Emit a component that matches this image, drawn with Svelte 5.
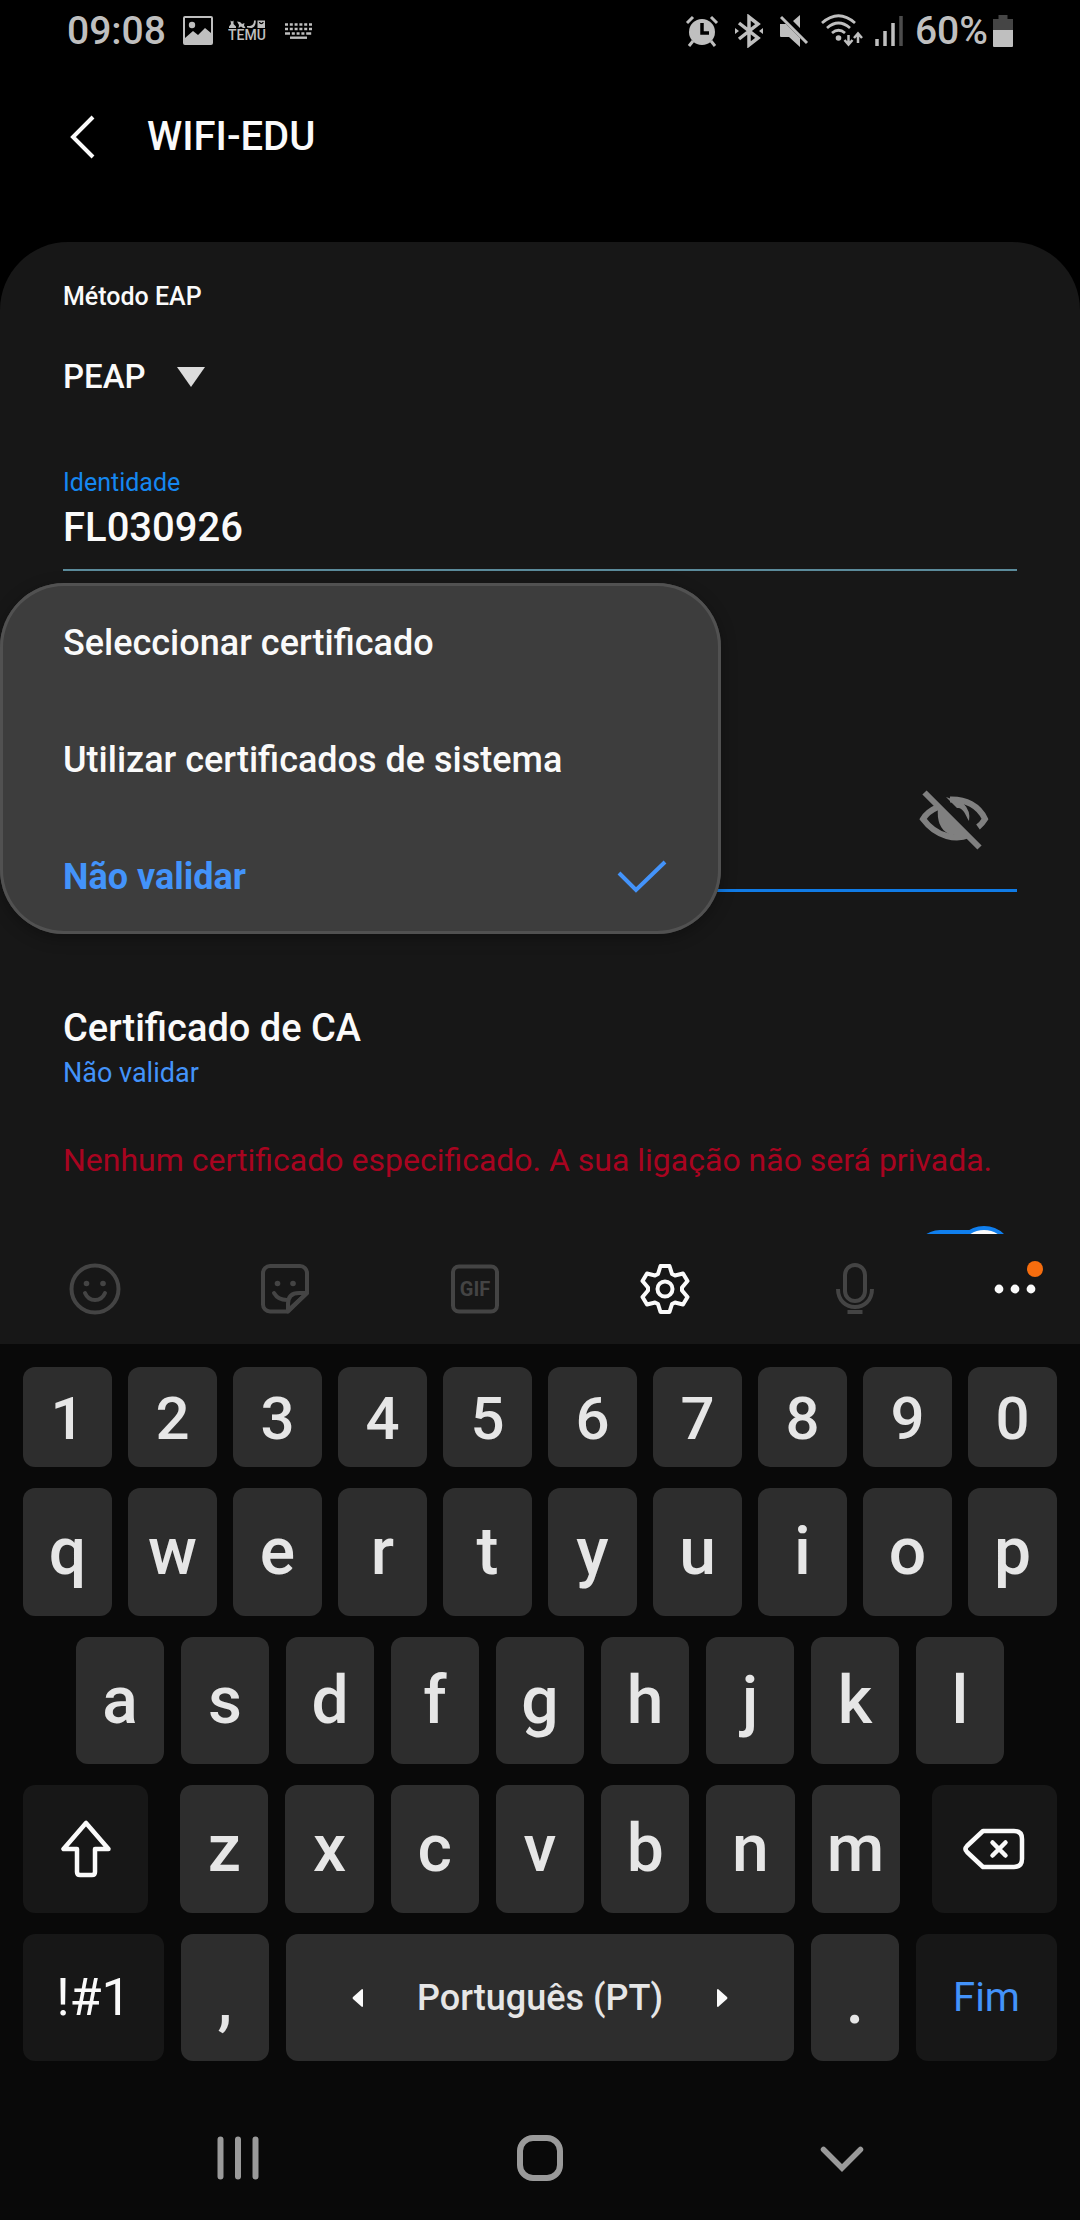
<script lang="ts">
	let method = $state('PEAP');
	let identity = $state('FL030926');
	let password = $state('');
	let certificate = $state('Não validar');
	let autoReconnect = $state(true);

	const certificates = ['Seleccionar certificado', 'Utilizar certificados de sistema', 'Não validar'];

	const digits = '1234567890'.split('');
	const topRow = 'qwertyuiop'.split('');
	const homeRow = 'asdfghjkl'.split('');
	const bottomRow = 'zxcvbnm'.split('');
</script>

<div class="screen">
	<header class="status-bar">
		<div class="status-group left">
			<span class="clock">09:08</span>
			<svg class="image-icon" width="32" height="32" viewBox="0 0 32 32">
				<path fill="currentColor" fill-rule="evenodd" d="M3 1h26a2 2 0 0 1 2 2v25a2 2 0 0 1-2 2H3a2 2 0 0 1-2-2V3a2 2 0 0 1 2-2zM3 3v20l8-7 5 4 7-7 6 5V3z" />
				<circle cx="10" cy="10" r="3.2" fill="currentColor" />
			</svg>
			<svg class="temu-icon" width="38" height="24" viewBox="0 0 38 24" fill="currentColor">
				<path d="M2.500 1.500l1.500 1 1.500-1V5L8 7.500V9H1V7.500L3 5zM9 2.500l3 .500 2 2 2.500-1-.500 2.500 1.500 2.500h-2.500L13 7.500 10.500 9 11 6zM26 1.500h1.800c0 5-2 7.500-5 7.500l-3.800-.500V7c4.500.500 7-1 7-5.500z" />
				<path fill-rule="evenodd" d="M29.500 1.500H37V9h-7.500zm1.300 1.500c1 3 4 3 5 0h-1.300c-.500 1.200-1.900 1.200-2.400 0z" />
				<text x="19" y="21" text-anchor="middle" font-size="14" font-weight="500">TEMU</text>
			</svg>
			<svg class="keyboard-icon" width="30" height="18" viewBox="0 0 30 18" stroke="currentColor" fill="none">
				<path stroke-width="2.600" stroke-dasharray="3 1.800" d="M1 2.500h28M1 7h28" />
				<path stroke-width="2.600" stroke-dasharray="5 1.800 3 1.800 3 1.800 3 1.800" d="M1 11.500h28" />
				<path stroke-width="2.400" d="M6 15.700h17" />
			</svg>
		</div>
		<div class="status-group right">
			<svg width="34" height="34" viewBox="0 0 34 34">
				<circle cx="17" cy="18" r="13" fill="currentColor" />
				<path d="M2 9l6-6M26 3l6 6M8 27l-4 5M26 27l4 5" stroke="currentColor" stroke-width="3" fill="none" />
				<path d="M17 9v10h7" stroke="#000" stroke-width="3.500" fill="none" />
			</svg>
			<svg class="bt" width="30" height="34" viewBox="0 0 30 34">
				<path d="M5 9l19 15-9 7V3l9 7L5 25" stroke="currentColor" stroke-width="3.500" fill="none" />
				<path d="M1 14l4 3-4 3zM29 14l-4 3 4 3z" fill="currentColor" />
			</svg>
			<svg class="mute" width="30" height="34" viewBox="0 0 30 34">
				<path d="M1 10h6L21 24v9L10 23H2q-1 0-1-1zM21 1v13l-7-7z" fill="currentColor" />
				<path d="M2 3l26 26" stroke="currentColor" stroke-width="3" />
			</svg>
			<svg class="wifi" width="42" height="34" viewBox="0 0 42 34" fill="none" stroke="currentColor" stroke-width="2.800">
				<path d="M1 9q16.500-14.500 33 0M6 14q11.500-10 23 0M11 19q6.500-5.500 13 0" />
				<circle cx="17.500" cy="24" r="2.800" fill="currentColor" stroke="none" />
				<path stroke-width="2.500" d="M27.500 21v9M23.500 26l4 4.500 4-4.500M37 29v-9M33 24l4-4.500 4 4.500" />
			</svg>
			<svg class="signal" width="28" height="34" viewBox="0 0 28 34" stroke="currentColor" stroke-width="3.500">
				<path d="M2 25v7M10 17v15M18 9v23" />
				<path d="M26 2v30" opacity="0.400" />
			</svg>
			<span class="clock">60%</span>
			<svg class="battery" width="22" height="34" viewBox="0 0 22 34">
				<path d="M6.500 1h9v4H21v12H1V5h5.500z" fill="#454545" />
				<path d="M1 16h20v16q0 1-1 1H2q-1 0-1-1z" fill="currentColor" />
			</svg>
		</div>
	</header>

	<div class="title-bar">
		<button class="back" aria-label="Voltar">
			<svg width="28" height="44" viewBox="0 0 28 44" fill="none" stroke="currentColor" stroke-width="4">
				<path d="M25 2L5 22l20 20" />
			</svg>
		</button>
		<h1>WIFI-EDU</h1>
	</div>

	<main class="sheet">
		<form class="form" onsubmit={(e) => e.preventDefault()}>
			<label class="small-label" for="eap">Método EAP</label>
			<div class="select-wrap">
				<select id="eap" bind:value={method}>
					<option>PEAP</option>
					<option>TLS</option>
					<option>PWD</option>
				</select>
				<svg width="28" height="20" viewBox="0 0 28 20"><path d="M0 0h28L14 20z" fill="#dcdcdc" /></svg>
			</div>

			<label class="small-label accent" for="identity">Identidade</label>
			<input id="identity" class="identity" type="text" bind:value={identity} />

			<div class="password">
				<input type="password" aria-label="Palavra-passe" bind:value={password} />
				<button type="button" class="eye" aria-label="Mostrar palavra-passe">
					<svg width="70" height="60" viewBox="0 0 70 60">
						<path d="M19 17C12 20 7 24 4 29c14 19 34 21 46 16" fill="none" stroke="currentColor" stroke-width="6" />
						<path d="M19 17Q17 38 30 44l17 3L21 19z" fill="currentColor" />
						<path d="M31 9.500C47 9 60 16 66 29q-3 5-7 8" fill="none" stroke="currentColor" stroke-width="6" />
						<path d="M27 7l11 11c6-1 8 6 12 13q2-10-6-18z" fill="currentColor" />
						<path d="M5.500 2.500l55 55" stroke="currentColor" stroke-width="6" />
					</svg>
				</button>
			</div>

			<button type="button" class="preference" aria-haspopup="listbox">
				<span class="pref-title">Certificado de CA</span>
				<span class="pref-value">{certificate}</span>
			</button>
			<p class="warning">Nenhum certificado especificado. A sua ligação não será privada.</p>
			<input class="switch" type="checkbox" role="switch" aria-label="Religar automaticamente" bind:checked={autoReconnect} />
		</form>

		<div class="menu" role="listbox" aria-label="Certificado de CA">
			{#each certificates as item}
				<button
					class="menu-item"
					class:selected={item === certificate}
					role="option"
					aria-selected={item === certificate}
					onclick={() => (certificate = item)}
				>
					{item}
					{#if item === certificate}
						<svg width="50" height="34" viewBox="0 0 50 34" fill="none" stroke="currentColor" stroke-width="4">
							<path d="M2 13l17 17L48 2" />
						</svg>
					{/if}
				</button>
			{/each}
		</div>
	</main>

	<div class="toolbar">
		<button class="tool" aria-label="Emojis">
			<svg width="52" height="52" viewBox="0 0 52 52" fill="none" stroke="currentColor" stroke-width="4">
				<circle cx="26" cy="26" r="23.500" />
				<path d="M16 30q3 7 10 7t10-7" stroke-linecap="round" />
				<circle cx="17.500" cy="20.500" r="2.800" fill="currentColor" stroke="none" />
				<circle cx="34" cy="20.500" r="2.800" fill="currentColor" stroke="none" />
			</svg>
		</button>
		<button class="tool" aria-label="Autocolantes">
			<svg width="52" height="52" viewBox="0 0 52 52" fill="none" stroke="currentColor" stroke-width="4" stroke-linejoin="round">
				<path d="M28 48.500H11a7 7 0 0 1-7-7V10a7 7 0 0 1 7-7h30a7 7 0 0 1 7 7v20z" />
				<path d="M15 30q4 7 13 7M29 48.500V41q0-11 11-11h8z" stroke-linecap="round" />
				<circle cx="18.500" cy="20.500" r="2.800" fill="currentColor" stroke="none" />
				<circle cx="34" cy="20.500" r="2.800" fill="currentColor" stroke="none" />
			</svg>
		</button>
		<button class="tool" aria-label="GIF">
			<svg width="52" height="52" viewBox="0 0 52 52">
				<rect x="4" y="3.500" width="44" height="45" rx="6" fill="none" stroke="currentColor" stroke-width="4" />
				<text x="26" y="33" text-anchor="middle" font-size="20" font-weight="700" fill="currentColor">GIF</text>
			</svg>
		</button>
		<button class="tool active" aria-label="Definições">
			<svg width="52" height="52" viewBox="0 0 52 52" fill="none" stroke="currentColor" stroke-width="4" stroke-linejoin="round">
				<path d="M21.500 3h9l2.500 8 3 1.500 8-2 4.500 7.500-5.500 6.500v3l5.500 6.500-4.500 7.500-8-2-3 1.500-2.500 8h-9L19 41l-3-1.500-8 2L3.500 34 9 27.500v-3L3.500 18 8 10.500l8 2 3-1.500z" />
				<circle cx="26" cy="26" r="7.500" />
			</svg>
		</button>
		<button class="tool" aria-label="Introdução por voz">
			<svg width="52" height="52" viewBox="0 0 52 52" fill="none" stroke="currentColor" stroke-width="4">
				<rect x="16" y="2" width="20" height="36" rx="10" />
				<path d="M9 26c0 24 34 24 34 0M18.500 49h15" />
			</svg>
		</button>
		<button class="tool active more" aria-label="Mais opções">
			<svg width="52" height="52" viewBox="0 0 52 52" fill="currentColor">
				<circle cx="10" cy="26" r="4.400" />
				<circle cx="26" cy="26" r="4.400" />
				<circle cx="42" cy="26" r="4.400" />
			</svg>
			<span class="badge"></span>
		</button>
	</div>

	<div class="keyboard">
		<div class="row digits">
			{#each digits as key}<button class="key">{key}</button>{/each}
		</div>
		<div class="row">
			{#each topRow as key}<button class="key">{key}</button>{/each}
		</div>
		<div class="row home">
			{#each homeRow as key}<button class="key">{key}</button>{/each}
		</div>
		<div class="row bottom">
			<button class="key dark shift" aria-label="Maiúsculas">
				<svg width="52" height="58" viewBox="0 0 52 58" fill="none" stroke="currentColor" stroke-width="4.500" stroke-linejoin="round">
					<path d="M26 3L3.500 29H17v23q0 3 3 3h12q3 0 3-3V29h13.500z" />
				</svg>
			</button>
			{#each bottomRow as key}<button class="key">{key}</button>{/each}
			<button class="key dark delete" aria-label="Apagar">
				<svg width="62" height="42" viewBox="0 0 62 42" fill="none" stroke="currentColor" stroke-width="4.500" stroke-linejoin="round">
					<path d="M20 3h31q8 0 8 8v20q0 8-8 8H20L4 24q-3-3 0-6z" />
					<path d="M29.500 14.500l13 13M42.500 14.500l-13 13" stroke-linecap="round" />
				</svg>
			</button>
		</div>
		<div class="row last">
			<button class="key dark wide symbols">!#1</button>
			<button class="key mark">,</button>
			<button class="key space">
				<svg width="12" height="20" viewBox="0 0 12 20"><path d="M11 2v16q0 1-1 1L1 11q-1-1 0-2l9-8q1 0 1 1z" fill="#fafafa" /></svg>
				<span>Português (PT)</span>
				<svg width="12" height="20" viewBox="0 0 12 20"><path d="M1 2v16q0 1 1 1l9-8q1-1 0-2L2 1q-1 0-1 1z" fill="#fafafa" /></svg>
			</button>
			<button class="key mark">.</button>
			<button class="key dark wide done">Fim</button>
		</div>
	</div>

	<nav class="nav-bar">
		<button aria-label="Recentes">
			<svg width="48" height="48" viewBox="0 0 48 48" stroke="currentColor" stroke-width="6" stroke-linecap="round">
				<path d="M6.500 5.500v37M24 5.500v37M41.500 5.500v37" />
			</svg>
		</button>
		<button aria-label="Início">
			<svg width="48" height="48" viewBox="0 0 48 48" fill="none" stroke="currentColor" stroke-width="6">
				<rect x="4" y="4" width="40" height="40" rx="13" />
			</svg>
		</button>
		<button aria-label="Fechar teclado">
			<svg width="48" height="48" viewBox="0 0 48 48" fill="none" stroke="currentColor" stroke-width="5.500" stroke-linecap="round">
				<path d="M5.500 15.500L24 34l18.500-18.500" />
			</svg>
		</button>
	</nav>
</div>

<style>
	:global(body) {
		background: #000;
	}

	.screen {
		display: flex;
		flex-direction: column;
		height: 100vh;
		font-family: Roboto, "Noto Sans", sans-serif;
		color: #fafafa;
		background: #000;
	}

	svg {
		display: block;
		flex: none;
	}

	button,
	input,
	select {
		box-sizing: border-box;
		margin: 0;
		padding: 0;
		border: 0;
		border-radius: 0;
		background: none;
		color: inherit;
		font: inherit;
		outline: none;
	}

	button {
		cursor: pointer;
	}

	.status-bar {
		box-sizing: border-box;
		display: flex;
		justify-content: space-between;
		padding: 8px 66px 0 67px;
		height: 56px;
		color: #bfbfbf;
	}

	.status-group {
		display: flex;
		align-items: center;
		height: 46px;
	}

	.clock {
		font-size: 39px;
		line-height: 46px;
		font-weight: 500;
	}

	.image-icon {
		margin-left: 16px;
	}

	.temu-icon {
		margin-left: 14px;
	}

	.keyboard-icon {
		margin-left: 18px;
	}

	.bt,
	.mute {
		margin-left: 15px;
	}

	.wifi,
	.signal {
		margin-left: 12px;
	}

	.signal {
		margin-right: 12px;
	}

	.battery {
		margin-left: 4px;
	}

	.title-bar {
		box-sizing: border-box;
		display: flex;
		align-items: center;
		gap: 51px;
		height: 186px;
		padding: 0 68px 24px;
	}

	h1 {
		margin: 0;
		font-size: 40px;
		line-height: 52px;
		font-weight: 500;
	}

	.sheet {
		position: relative;
		flex: 1;
		min-height: 0;
		overflow: hidden;
		background: #171717;
		border-radius: 68px 68px 0 0;
	}

	.form {
		display: flex;
		flex-direction: column;
		align-items: stretch;
		padding: 39px 63px 0;
	}

	.small-label {
		font-size: 25px;
		line-height: 32px;
		font-weight: 500;
	}

	.accent {
		margin-top: 68px;
		color: #1587f0;
		font-weight: 400;
	}

	.select-wrap {
		display: flex;
		align-items: center;
		gap: 31px;
		margin-top: 42px;
	}

	select {
		appearance: none;
		font-size: 33px;
		line-height: 44px;
		font-weight: 500;
	}

	.identity {
		width: 100%;
		height: 72px;
		padding-bottom: 13px;
		border-bottom: 2px solid #5b8b9b;
		font-size: 40px;
		line-height: 52px;
		font-weight: 500;
	}

	.password {
		display: flex;
		align-items: center;
		height: 141px;
		margin-top: 180px;
		padding-right: 28px;
		box-sizing: border-box;
		border-bottom: 3px solid #107be6;
	}

	.password input {
		flex: 1;
		font-size: 40px;
	}

	.eye {
		color: #808080;
	}

	.preference {
		display: flex;
		flex-direction: column;
		gap: 2px;
		margin-top: 111px;
		text-align: left;
	}

	.pref-title {
		font-size: 38px;
		line-height: 50px;
		font-weight: 500;
	}

	.pref-value {
		font-size: 27px;
		line-height: 36px;
		color: #4393fa;
	}

	.warning {
		margin: 47px 0 44px;
		font-size: 32px;
		line-height: 44px;
		color: #a80420;
		white-space: nowrap;
	}

	.switch {
		appearance: none;
		position: relative;
		align-self: flex-end;
		width: 92px;
		height: 50px;
		margin: 4px 10px 0 0;
		border-radius: 25px;
		background: #107fee;
	}

	.switch::before {
		content: "";
		position: absolute;
		top: -4px;
		right: -6px;
		width: 50px;
		height: 50px;
		border: 4px solid #107fee;
		border-radius: 50%;
		background: #fafafa;
	}

	.menu {
		position: absolute;
		top: 341px;
		left: 0;
		width: min(721px, 100%);
		border-radius: 64px;
		background: #3d3d3d;
		box-shadow: inset 0 0 0 3px #515151, 0 4px 16px rgba(0, 0, 0, 0.3);
	}

	.menu-item {
		display: flex;
		align-items: center;
		justify-content: space-between;
		width: 100%;
		height: 117px;
		padding: 2px 54px 0 63px;
		font-size: 36px;
		line-height: 44px;
		font-weight: 500;
	}

	.menu-item.selected {
		font-weight: 700;
		color: #4393fa;
	}

	.toolbar {
		display: grid;
		grid-template-columns: repeat(5, 190fr) 130fr;
		height: 110px;
		background: #171717;
	}

	.tool {
		display: grid;
		place-items: center;
		color: #444;
	}

	.active {
		color: #fafafa;
	}

	.more {
		position: relative;
	}

	.badge {
		position: absolute;
		top: 27px;
		left: calc(50% + 12px);
		width: 16px;
		height: 16px;
		border-radius: 50%;
		background: #f66d0e;
	}

	.keyboard {
		display: flex;
		flex-direction: column;
		gap: 21px;
		padding: 23px 23px 27px;
		background: #090909;
	}

	.row {
		display: flex;
		gap: 16px;
		height: 128px;
	}

	.digits {
		height: 100px;
	}

	.home,
	.last {
		height: 127px;
		gap: 17px;
	}

	.home {
		padding: 0 53px;
	}

	.bottom {
		gap: 17px;
	}

	.key {
		flex: 88 1 0;
		display: flex;
		align-items: center;
		justify-content: center;
		min-width: 0;
		border-radius: 12px;
		background: #2d2d2d;
		color: #e6e6e6;
		font-size: 66px;
		line-height: 76px;
		font-weight: 500;
	}

	.digits .key {
		padding-top: 4px;
		font-size: 60px;
	}

	.dark {
		background: #171717;
		color: #fafafa;
	}

	.shift,
	.delete {
		flex-grow: 125;
	}

	.shift {
		margin-right: 15px;
	}

	.delete {
		margin-left: 15px;
	}

	.wide {
		flex-grow: 141;
	}

	.symbols {
		font-size: 52px;
		font-weight: 400;
	}

	.mark {
		padding-top: 6px;
	}

	.space {
		flex-grow: 508;
		gap: 53px;
		font-size: 36px;
		font-weight: 500;
	}

	.done {
		font-size: 40px;
		font-weight: 400;
	}

	.key.done {
		color: #4393fa;
	}

	.nav-bar {
		display: flex;
		justify-content: center;
		gap: 254px;
		padding: 46px 0 38px;
		background: #090909;
		color: #9a9a9a;
	}
</style>
